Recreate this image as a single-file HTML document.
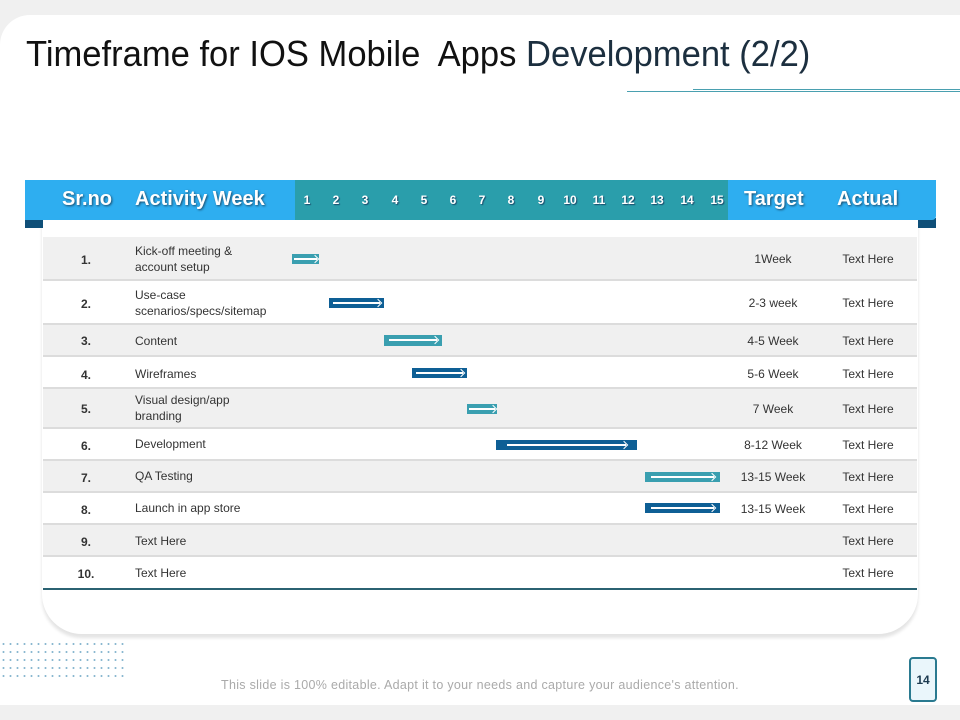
<!DOCTYPE html>
<html><head><meta charset="utf-8"><style>
*{margin:0;padding:0;box-sizing:border-box}
body{width:960px;height:720px;background:#f0f0f0;position:relative;overflow:hidden;font-family:"Liberation Sans",sans-serif}
.slide{position:absolute;left:0;top:15px;width:960px;height:690px;background:#fff;border-radius:30px 0 0 0}
.title{position:absolute;left:26px;top:33px;font-size:36px;color:#111;white-space:nowrap;transform:scaleX(0.96);transform-origin:left}
.title span{color:#1c2f3f}
.card{position:absolute;left:42px;top:214px;width:876px;height:420px;background:#fff;border-radius:0 0 40px 40px;box-shadow:0 4px 3px #e4e4e4}
.hdr{position:absolute;left:25px;top:180px;width:911px;height:40px;background:#2eaef0;border-radius:0 0 4px 0}
.teal{position:absolute;left:295px;top:180px;width:433px;height:40px;background:#2a9eab}
.tab{position:absolute;top:218px;width:18px;height:10px;background:#0f4f78}
.h{position:absolute;top:188px;color:#fff;font-weight:bold;font-size:20px;text-shadow:1px 1px 2px #1a4a6a}
.n{position:absolute;top:193px;color:#fff;font-weight:bold;font-size:12px;text-shadow:1px 1px 1px #1a4a6a;width:20px;text-align:center}
.row{position:absolute;left:43px;width:874px;border-bottom:2px solid #dcdcdc;font-size:12px;color:#333}
.g{background:#f0f0f0}
.row div{position:absolute}
.sr{left:32px;width:22px;text-align:center;font-weight:bold}
.act{left:92px;line-height:16px}
.tg{left:680px;width:100px;text-align:center}
.ac{left:780px;width:90px;text-align:center}
.bar{position:absolute;height:10px}
.bar::after{content:"";position:absolute;left:8%;right:8%;top:4px;height:1.5px;background:#fff}
.bar::before{content:"";position:absolute;right:8%;top:2px;width:5px;height:5px;border-top:1.5px solid #fff;border-right:1.5px solid #fff;transform:rotate(45deg);margin-right:-1px}
.t{background:#3a9fb0}.v{background:#0e5f95}
</style></head><body>
<div class="slide"></div>
<div class="title">Timeframe for IOS Mobile&nbsp; Apps <span>Development (2/2)</span></div>
<div style="position:absolute;left:627px;top:91px;width:333px;height:1px;background:#4aa0b0"></div>
<div style="position:absolute;left:693px;top:89px;width:267px;height:1px;background:#4aa0b0"></div>
<div class="card"></div>
<div class="tab" style="left:25px"></div><div class="tab" style="left:918px"></div>
<div class="hdr"></div><div class="teal"></div>
<div class="h" style="left:62px">Sr.no</div>
<div class="h" style="left:135px">Activity Week</div>
<div class="h" style="left:744px">Target</div>
<div class="h" style="left:837px">Actual</div>
<div class="n" style="left:297px">1</div><div class="n" style="left:326px">2</div><div class="n" style="left:355px">3</div><div class="n" style="left:385px">4</div><div class="n" style="left:414px">5</div><div class="n" style="left:443px">6</div><div class="n" style="left:472px">7</div><div class="n" style="left:501px">8</div><div class="n" style="left:531px">9</div><div class="n" style="left:560px">10</div><div class="n" style="left:589px">11</div><div class="n" style="left:618px">12</div><div class="n" style="left:647px">13</div><div class="n" style="left:677px">14</div><div class="n" style="left:707px">15</div>

<div class="row g" style="top:237px;height:44px"><div class="sr" style="top:16px">1.</div><div class="act" style="top:6px">Kick-off meeting &amp;<br>account setup</div><div class="tg" style="top:15px">1Week</div><div class="ac" style="top:15px">Text Here</div></div>
<div class="row" style="top:281px;height:44px"><div class="sr" style="top:16px">2.</div><div class="act" style="top:6px">Use-case<br>scenarios/specs/sitemap</div><div class="tg" style="top:15px">2-3 week</div><div class="ac" style="top:15px">Text Here</div></div>
<div class="row g" style="top:325px;height:32px"><div class="sr" style="top:9px">3.</div><div class="act" style="top:8px">Content</div><div class="tg" style="top:9px">4-5 Week</div><div class="ac" style="top:9px">Text Here</div></div>
<div class="row" style="top:357px;height:32px"><div class="sr" style="top:11px">4.</div><div class="act" style="top:9px">Wireframes</div><div class="tg" style="top:10px">5-6 Week</div><div class="ac" style="top:10px">Text Here</div></div>
<div class="row g" style="top:389px;height:40px"><div class="sr" style="top:13px">5.</div><div class="act" style="top:3px">Visual design/app<br>branding</div><div class="tg" style="top:13px">7 Week</div><div class="ac" style="top:13px">Text Here</div></div>
<div class="row" style="top:429px;height:32px"><div class="sr" style="top:10px">6.</div><div class="act" style="top:7px">Development</div><div class="tg" style="top:9px">8-12 Week</div><div class="ac" style="top:9px">Text Here</div></div>
<div class="row g" style="top:461px;height:32px"><div class="sr" style="top:10px">7.</div><div class="act" style="top:7px">QA Testing</div><div class="tg" style="top:9px">13-15 Week</div><div class="ac" style="top:9px">Text Here</div></div>
<div class="row" style="top:493px;height:32px"><div class="sr" style="top:10px">8.</div><div class="act" style="top:7px">Launch in app store</div><div class="tg" style="top:9px">13-15 Week</div><div class="ac" style="top:9px">Text Here</div></div>
<div class="row g" style="top:525px;height:32px"><div class="sr" style="top:10px">9.</div><div class="act" style="top:8px">Text Here</div><div class="ac" style="top:9px">Text Here</div></div>
<div class="row" style="top:557px;height:33px;border-bottom:2px solid #2b6272"><div class="sr" style="top:10px">10.</div><div class="act" style="top:8px">Text Here</div><div class="ac" style="top:9px">Text Here</div></div>

<div class="bar t" style="left:292px;top:254px;width:27px"></div>
<div class="bar v" style="left:329px;top:298px;width:55px"></div>
<div class="bar t" style="left:384px;top:335px;width:58px;height:11px"></div>
<div class="bar v" style="left:412px;top:368px;width:55px"></div>
<div class="bar t" style="left:467px;top:404px;width:30px"></div>
<div class="bar v" style="left:496px;top:440px;width:141px"></div>
<div class="bar t" style="left:645px;top:472px;width:75px"></div>
<div class="bar v" style="left:645px;top:503px;width:75px"></div>

<div style="position:absolute;left:0;top:640px;width:125px;height:38px;background-image:radial-gradient(circle,#8ab8d0 0.8px,transparent 1.2px);background-size:7px 8px"></div>
<div style="position:absolute;left:0;top:678px;width:960px;text-align:center;font-size:12.5px;letter-spacing:0.3px;color:#aaa">This slide is 100% editable. Adapt it to your needs and capture your audience's attention.</div>
<div style="position:absolute;left:909px;top:657px;width:28px;height:45px;border:2px solid #2a7a90;border-radius:4px;background:#eaf6fb;text-align:center;font-size:12px;font-weight:bold;color:#1c3a50;padding-top:14px">14</div>
</body></html>
